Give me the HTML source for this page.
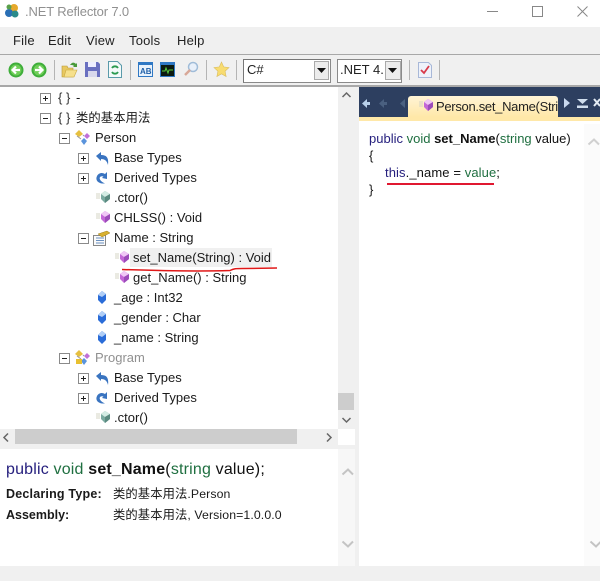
<!DOCTYPE html>
<html><head><meta charset="utf-8"><style>
html,body{margin:0;padding:0;background:#f0f0f0}
#p{position:relative;width:600px;height:581px;overflow:hidden;background:#f0f0f0;font:13px "Liberation Sans","Noto Sans CJK SC",sans-serif;color:#1a1a1a}
#p>*{position:absolute}
.t{white-space:nowrap;line-height:16px;letter-spacing:0}
.m{top:33px;line-height:16px;font-size:13px;letter-spacing:.2px;color:#222}
.b{width:9px;height:9px;border:1px solid #8a8a8a;background:#fff}
.b:before{content:"";position:absolute;left:2px;top:4px;width:5px;height:1px;background:#222}
.pl:after{content:"";position:absolute;left:4px;top:2px;width:1px;height:5px;background:#222}
.br{font:13px "Liberation Sans",sans-serif;letter-spacing:0;color:#333;line-height:16px;white-space:pre}
svg{overflow:visible}
</style></head><body><div id="p">
<svg width="0" height="0" style="left:0;top:0"><defs>
<g id="cube"><path d="M0 3h4M0 5h4M0 7h4" stroke="#d4d4c4" stroke-width="1"/><path d="M9 0l5 3v5l-5 4-4-4V3z" fill="#c468d8"/><path d="M9 0l5 3-5 3-4-3z" fill="#f0c8f6"/><path d="M9 6l5-3v5l-5 4z" fill="#9c4cba"/></g>
<g id="cube2"><path d="M0 3h4M0 5h4M0 7h4" stroke="#d4d4c4" stroke-width="1"/><path d="M9 0l5 3v5l-5 4-4-4V3z" fill="#7aaaa0"/><path d="M9 0l5 3-5 3-4-3z" fill="#d4ece4"/><path d="M9 6l5-3v5l-5 4z" fill="#5a8a80"/></g>
<g id="fld"><path d="M5 0l4 3v6l-4 4-4-4V4z" fill="#2a6cd8"/><path d="M5 0l4 3-4 3-4-2z" fill="#b0cef6"/></g>
<g id="base"><path d="M1 5l5-4v3c5 0 8 2 7 10-1-4-3-6-7-6v2z" fill="#3a74c0"/></g>
<g id="der"><path d="M12 1v7l-5-1 1.500-1.500c-3-1-4.500 1-3.500 3 1 2 3 3 5 4H7C3 12 0 9 2 5c1.500-3 5-4 8-2z" fill="#3a74c0"/></g>
<g id="cls"><path d="M1 4l4-4 4 4-4 3z" fill="#e6c040"/><path d="M10 6l3-3 3 3-3 3z" fill="#c070d8"/><path d="M7 11l3-3 3 3-3 4z" fill="#5a94dc"/><path d="M3 6l4 3M9 5l1 1" stroke="#999"/></g>
</defs></svg>

<!-- title bar -->
<div style="left:0;top:0;width:600px;height:27px;background:#fff"></div>
<svg style="left:4px;top:3px" width="17" height="17"><circle cx="10" cy="5" r="4" fill="#e6a92c"/><circle cx="5" cy="10" r="4" fill="#2a6fb5"/><circle cx="11" cy="11" r="3.500" fill="#2a8a8a"/><circle cx="5" cy="4" r="2.500" fill="#5aa04a"/></svg>
<div class="t" style="left:25px;top:4px;color:#909090;font-size:13px;letter-spacing:-.15px">.NET Reflector 7.0</div>
<div style="left:487px;top:11px;width:11px;height:1px;background:#888"></div>
<div style="left:532px;top:6px;width:9px;height:9px;border:1px solid #888"></div>
<svg style="left:577px;top:6px" width="12" height="12"><path d="M.5.500l10 10M10.500.500l-10 10" stroke="#888"/></svg>

<!-- menu -->
<div class="m" style="left:13px">File</div><div class="m" style="left:48px">Edit</div><div class="m" style="left:86px">View</div><div class="m" style="left:129px">Tools</div><div class="m" style="left:177px">Help</div>
<div style="left:0;top:54px;width:600px;height:1px;background:#a8a8a8"></div>

<!-- toolbar -->
<svg style="left:8px;top:62px" width="16" height="16"><circle cx="8" cy="8" r="7.500" fill="#3fae3a"/><circle cx="8" cy="8" r="5.500" fill="#6fce58"/><path d="M12 8H5M8 4.500L4.500 8 8 11.500" stroke="#fff" stroke-width="2.200" fill="none"/></svg>
<svg style="left:31px;top:62px" width="16" height="16"><circle cx="8" cy="8" r="7.500" fill="#3fae3a"/><circle cx="8" cy="8" r="5.500" fill="#6fce58"/><path d="M4 8h7M8 4.500L11.500 8 8 11.500" stroke="#fff" stroke-width="2.200" fill="none"/></svg>
<div style="left:54px;top:60px;width:1px;height:20px;background:#b4b4b4"></div>
<svg style="left:61px;top:61px" width="17" height="17"><path d="M1 5h5l1 2h5v9H1z" fill="#e8c860" stroke="#b89838" stroke-width=".6"/><path d="M3 16l2-7h11l-3 7z" fill="#f6e08c" stroke="#c8a840" stroke-width=".6"/><path d="M9 4c2-3 4-3 6-1l1-1v4h-4l1-1c-1-1-2-1-4-1z" fill="#4a9a3a"/></svg>
<svg style="left:85px;top:62px" width="15" height="15"><path d="M0 0h13l2 2v13H0z" fill="#6a70c0"/><path d="M3 0h8v5H3z" fill="#eef"/><path d="M3 9h9v6H3z" fill="#d8d8ec"/></svg>
<svg style="left:108px;top:61px" width="14" height="17"><path d="M.5.500h9l4 4v12H.5z" fill="#f4fafa" stroke="#5a9aaa"/><path d="M4 7a3.500 3.500 0 0 1 6 0M10 11a3.500 3.500 0 0 1-6 0" stroke="#2a9a50" stroke-width="1.800" fill="none"/></svg>
<div style="left:130px;top:60px;width:1px;height:20px;background:#b4b4b4"></div>
<svg style="left:138px;top:62px" width="15" height="15"><rect width="15" height="15" fill="#2f78c4"/><rect x="1" y="3" width="13" height="11" fill="#e8f2fc"/><text x="2" y="12" font-size="8" font-weight="bold" fill="#2060a8" font-family="Liberation Sans">AB</text></svg>
<svg style="left:160px;top:62px" width="15" height="15"><rect width="15" height="15" fill="#2f78c4"/><rect x="1" y="3" width="13" height="11" fill="#0c1a10"/><path d="M2 9h3l1-3 2 5 1-3h4" stroke="#5ad040" fill="none"/></svg>
<svg style="left:183px;top:61px" width="16" height="16"><circle cx="10" cy="6" r="4.500" fill="#e8f0fa" stroke="#a0bcd8" stroke-width="1.500"/><path d="M7 9l-5 5" stroke="#d8a898" stroke-width="2.500"/></svg>
<div style="left:206px;top:60px;width:1px;height:20px;background:#b4b4b4"></div>
<svg style="left:214px;top:62px" width="15" height="15"><path d="M7.500 0l2.200 4.900 5.300.700-3.900 3.600 1 5.300-4.600-2.600L2.900 14.500l1-5.300L0 5.600l5.300-.700z" fill="#f8dc70" stroke="#d8bc60" stroke-width=".6"/></svg>
<div style="left:236px;top:60px;width:1px;height:20px;background:#b4b4b4"></div>

<div style="left:243px;top:59px;width:86px;height:22px;background:#fff;border:1px solid #8a8a8a;border-top-color:#777;border-left-color:#777"></div>
<div class="t" style="left:247px;top:62px;color:#222">C#</div>
<div style="left:314px;top:61px;width:15px;height:19px;background:#ececec;border:1px solid #aaa;box-sizing:border-box"></div>
<svg style="left:317px;top:68px" width="9" height="6"><path d="M0 0h9L4.500 5z" fill="#111"/></svg>
<div style="left:337px;top:59px;width:63px;height:22px;background:#fff;border:1px solid #8a8a8a"></div>
<div class="t" style="left:340px;top:62px;color:#222;width:44px;overflow:hidden">.NET 4.0</div>
<div style="left:385px;top:61px;width:16px;height:19px;background:#ececec;border:1px solid #aaa;box-sizing:border-box"></div>
<svg style="left:388px;top:68px" width="9" height="6"><path d="M0 0h9L4.500 5z" fill="#111"/></svg>
<div style="left:409px;top:60px;width:1px;height:20px;background:#b4b4b4"></div>
<svg style="left:418px;top:62px" width="14" height="16"><path d="M.5.500h10l3 3v12H.5z" fill="#eef2fa" stroke="#a8b8d8"/><path d="M3 8l3 3 5-7" stroke="#d83a4a" stroke-width="1.800" fill="none"/></svg>
<div style="left:439px;top:60px;width:1px;height:20px;background:#b4b4b4"></div>
<div style="left:0;top:85px;width:600px;height:2px;background:#a8a8a8"></div>

<!-- tree panel -->
<div style="left:0;top:87px;width:355px;height:358px;background:#fff"></div>
<div style="left:338px;top:87px;width:17px;height:342px;background:#f0f0f0"></div>
<div style="left:338px;top:393px;width:16px;height:17px;background:#cdcdcd"></div>
<svg style="left:342px;top:92px" width="9" height="6"><path d="M.5 5l4-4 4 4" stroke="#666" stroke-width="1.500" fill="none"/></svg>
<svg style="left:342px;top:417px" width="9" height="6"><path d="M.5 1l4 4 4-4" stroke="#666" stroke-width="1.500" fill="none"/></svg>
<div style="left:0;top:429px;width:338px;height:16px;background:#f0f0f0"></div>
<div style="left:15px;top:429px;width:282px;height:15px;background:#cdcdcd"></div>
<svg style="left:3px;top:433px" width="6" height="9"><path d="M5 .500l-4 4 4 4" stroke="#666" stroke-width="1.500" fill="none"/></svg>
<svg style="left:326px;top:433px" width="6" height="9"><path d="M1 .500l4 4-4 4" stroke="#666" stroke-width="1.500" fill="none"/></svg>

<!-- tree rows -->
<div class="b pl" style="left:40px;top:93px"></div><div class="br" style="left:58px;top:90px">{ }</div><div class="t" style="left:76px;top:90px">-</div>
<div class="b" style="left:40px;top:113px"></div><div class="br" style="left:58px;top:110px">{ }</div><div class="t" style="left:76px;top:110px;font-size:12.300px;letter-spacing:.1px">类的基本用法</div>
<div class="b" style="left:59px;top:133px"></div><svg style="left:74px;top:130px" width="17" height="16"><use href="#cls"/></svg><div class="t" style="left:95px;top:130px">Person</div>
<div class="b pl" style="left:78px;top:153px"></div><svg style="left:95px;top:151px" width="14" height="15"><use href="#base"/></svg><div class="t" style="left:114px;top:150px">Base Types</div>
<div class="b pl" style="left:78px;top:173px"></div><svg style="left:95px;top:171px" width="14" height="15"><use href="#der"/></svg><div class="t" style="left:114px;top:170px">Derived Types</div>
<svg style="left:96px;top:191px" width="15" height="13"><use href="#cube2"/></svg><div class="t" style="left:114px;top:190px">.ctor()</div>
<svg style="left:96px;top:211px" width="15" height="13"><use href="#cube"/></svg><div class="t" style="left:114px;top:210px">CHLSS() : Void</div>
<div class="b" style="left:78px;top:233px"></div><svg style="left:93px;top:230px" width="17" height="16"><path d="M.5 5.500h12v10H.5z" fill="#fafafa" stroke="#888"/><path d="M3 8h8M3 10.500h8M3 13h8" stroke="#6a90c0"/><path d="M5 4l9-3 3 2-8 4z" fill="#d8b030" stroke="#a08020" stroke-width=".5"/></svg><div class="t" style="left:114px;top:230px">Name : String</div>
<div style="left:130px;top:248px;width:142px;height:19px;background:#f0f0f0"></div>
<svg style="left:115px;top:251px" width="15" height="13"><use href="#cube"/></svg><div class="t" style="left:133px;top:250px">set_Name(String) : Void</div>
<svg style="left:115px;top:271px" width="15" height="13"><use href="#cube"/></svg><div class="t" style="left:133px;top:270px">get_Name() : String</div>
<svg style="left:97px;top:291px" width="11" height="13"><use href="#fld"/></svg><div class="t" style="left:114px;top:290px">_age : Int32</div>
<svg style="left:97px;top:311px" width="11" height="13"><use href="#fld"/></svg><div class="t" style="left:114px;top:310px">_gender : Char</div>
<svg style="left:97px;top:331px" width="11" height="13"><use href="#fld"/></svg><div class="t" style="left:114px;top:330px">_name : String</div>
<div class="b" style="left:59px;top:353px"></div><svg style="left:74px;top:350px" width="17" height="16"><use href="#cls"/><path d="M2 9h6v5H2z" fill="#e8c030"/></svg><div class="t" style="left:95px;top:350px;color:#909090">Program</div>
<div class="b pl" style="left:78px;top:373px"></div><svg style="left:95px;top:371px" width="14" height="15"><use href="#base"/></svg><div class="t" style="left:114px;top:370px">Base Types</div>
<div class="b pl" style="left:78px;top:393px"></div><svg style="left:95px;top:391px" width="14" height="15"><use href="#der"/></svg><div class="t" style="left:114px;top:390px">Derived Types</div>
<svg style="left:96px;top:411px" width="15" height="13"><use href="#cube2"/></svg><div class="t" style="left:114px;top:410px">.ctor()</div>
<svg style="left:122px;top:264px" width="155" height="8"><path d="M0 5.500c30 1 75 2 108 1 4-2 6-2 12-2l35-.500" stroke="#e01818" stroke-width="1.500" fill="none"/></svg>

<!-- detail panel -->
<div style="left:0;top:449px;width:355px;height:117px;background:#fff"></div>
<div style="left:338px;top:449px;width:17px;height:117px;background:#f7f7f7"></div>
<svg style="left:342px;top:468px" width="12" height="8"><path d="M.5 6.500L6 1.500l5 5" stroke="#c4c4c4" stroke-width="2" fill="none"/></svg>
<svg style="left:342px;top:540px" width="12" height="8"><path d="M.5 1.500L6 6.500l5-5" stroke="#c4c4c4" stroke-width="2" fill="none"/></svg>
<div class="t" style="left:6px;top:460px;font-size:16px;line-height:20px;letter-spacing:.18px;color:#111"><span style="color:#26207e">public</span> <span style="color:#1f6f40">void</span> <b>set_Name</b>(<span style="color:#1f6f40">string</span> value);</div>
<div class="t" style="left:6px;top:486px;font-weight:bold;font-size:12.500px;letter-spacing:.2px">Declaring Type:</div>
<div class="t" style="left:6px;top:507px;font-weight:bold;font-size:12.500px;letter-spacing:0">Assembly:</div>
<div class="t" style="left:113px;top:486px;font-size:12.300px;letter-spacing:.1px">类的基本用法.Person</div>
<div class="t" style="left:113px;top:507px;font-size:12.300px;letter-spacing:.1px">类的基本用法, Version=1.0.0.0</div>

<!-- right panel -->
<div style="left:359px;top:87px;width:241px;height:479px;background:#fff"></div>
<div style="left:359px;top:87px;width:241px;height:30px;background:#2d3f60"></div>
<svg style="left:362px;top:98px" width="50" height="11"><path d="M0 5.500L5 1v3h3v3H5v3z" fill="#b8d0ea"/><path d="M17 5.500L22 1v3h3v3h-3v3z" fill="#4a6080"/><path d="M38 5.500L43 1v9z" fill="#4a6080"/></svg>
<div style="left:408px;top:96px;width:150px;height:21px;background:linear-gradient(#fff4d6,#ffe8a8);border-radius:3px 3px 0 0"></div>
<div style="left:359px;top:117px;width:241px;height:4px;background:#ffe8a8"></div>
<svg style="left:419px;top:99px" width="15" height="13"><use href="#cube"/></svg>
<div class="t" style="left:436px;top:99px;width:122px;overflow:hidden;color:#222;letter-spacing:-.3px">Person.set_Name(String)</div>
<svg style="left:564px;top:97px" width="36" height="13"><path d="M0 1l6 5-6 5z" fill="#c8d8ee"/><path d="M13 2h11l-5.500 5zM13 8.500h11V11H13z" fill="#d0deee"/><path d="M30 2l6 7M36 2l-6 7" stroke="#e4ecf4" stroke-width="2"/></svg>

<div style="left:584px;top:124px;width:16px;height:442px;background:#fbfbfb"></div>
<svg style="left:588px;top:138px" width="12" height="8"><path d="M.5 6.500L6 1.500l5 5" stroke="#d0d0d0" stroke-width="2" fill="none"/></svg>
<svg style="left:590px;top:540px" width="10" height="8"><path d="M.5 1.500L6 6.500l5-5" stroke="#c4c4c4" stroke-width="2" fill="none"/></svg>

<div class="t" style="left:369px;top:131px;letter-spacing:0;color:#111"><span style="color:#26207e">public</span> <span style="color:#1f6f40">void</span> <b>set_Name</b>(<span style="color:#1f6f40">string</span> value)</div>
<div class="t" style="left:369px;top:148px">{</div>
<div class="t" style="left:385px;top:165px;letter-spacing:.1px;color:#111"><span style="color:#26207e">this</span>._name = <span style="color:#1f6f40">value</span>;</div>
<div class="t" style="left:369px;top:182px">}</div>
<div style="left:387px;top:183px;width:107px;height:2px;background:#e01830"></div>
</div></body></html>
